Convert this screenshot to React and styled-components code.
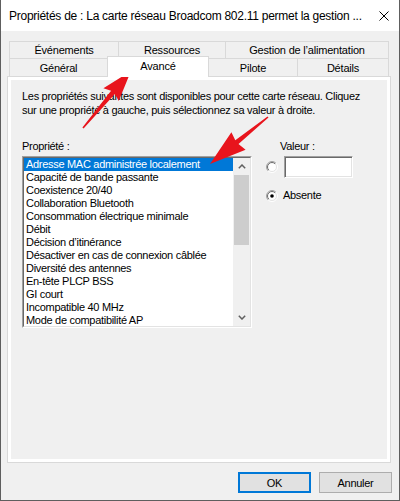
import React, { useId } from 'react';
import styled, { createGlobalStyle } from 'styled-components';

const GlobalStyle = createGlobalStyle`
  html, body { margin: 0; padding: 0; background: #ffffff; }
  body { width: 400px; height: 501px; overflow: hidden; }
  *, *::before, *::after { box-sizing: border-box; }
`;

const Window = styled.div`
  position: relative;
  width: 400px;
  height: 501px;
  display: flex;
  flex-direction: column;
  border: 1px solid #5e5e5e;
  border-top: none;
  background: #f0f0f0;
  font-family: "Liberation Sans", Arial, sans-serif;
  color: #000;
`;

const TitleBar = styled.div`
  flex: none;
  height: 31px;
  background: #ffffff;
  display: flex;
  align-items: center;
  justify-content: space-between;
  padding: 0 10px 0 8px;
`;

const Title = styled.div`
  font-size: 12px;
  letter-spacing: -0.26px;
  white-space: nowrap;
`;

const Body = styled.div`
  flex: 1;
  display: flex;
  flex-direction: column;
  padding: 10px 8px 0 6px;
`;

const TabRows = styled.div`
  display: flex;
  flex-direction: column;
  margin-left: 2px;
`;

const TabRow = styled.div`
  display: flex;
  align-items: flex-end;
  margin-top: ${(p) => (p.$front ? '-3px' : '0')};
`;

const Tab = styled.div`
  position: relative;
  width: ${(p) => p.$w}px;
  height: ${(p) => (p.$active ? 21 : 18)}px;
  margin-left: ${(p) => (p.$first ? 0 : -1)}px;
  margin-bottom: ${(p) => (p.$active ? -1 : 0)}px;
  padding-bottom: ${(p) => (p.$active ? 3 : 0)}px;
  z-index: ${(p) => (p.$active ? 3 : 1)};
  border: 1px solid #d9d9d9;
  border-bottom: ${(p) => (p.$back ? '1px solid #d9d9d9' : 'none')};
  background: ${(p) => (p.$active ? '#ffffff' : '#f0f0f0')};
  display: flex;
  align-items: center;
  justify-content: center;
  font-size: 11px;
  letter-spacing: -0.2px;
  white-space: nowrap;
`;

const Panel = styled.div`
  width: 384px;
  height: 387px;
  border: 1px solid #d9d9d9;
  background: #ffffff;
  padding: 3px;
  display: flex;
`;

const Page = styled.div`
  flex: 1;
  background: #f0f0f0;
  padding: 9px 0 0 11px;
  display: flex;
  flex-direction: column;
  font-size: 11px;
  letter-spacing: -0.3px;
`;

const Description = styled.p`
  margin: 0;
  line-height: 14px;
  white-space: nowrap;
`;

const Main = styled.div`
  display: flex;
  align-items: flex-start;
  margin-top: 22px;
`;

const LeftColumn = styled.div`
  width: 230px;
  display: flex;
  flex-direction: column;
`;

const RightColumn = styled.div`
  margin-left: 14px;
  display: flex;
  flex-direction: column;
`;

const FieldLabel = styled.div`
  line-height: 14px;
  margin-bottom: 3px;
  padding-left: ${(p) => p.$indent || 0}px;
  white-space: nowrap;
`;

const ListOuter = styled.div`
  width: 230px;
  height: 172px;
  border: 1px solid;
  border-color: #a0a0a0 #ffffff #ffffff #a0a0a0;
  display: flex;
`;

const ListInner = styled.div`
  flex: 1;
  border: 1px solid;
  border-color: #696969 #e3e3e3 #e3e3e3 #696969;
  background: #ffffff;
  display: flex;
  overflow: hidden;
`;

const Items = styled.div`
  flex: 1;
  display: flex;
  flex-direction: column;
  overflow: hidden;
`;

const Item = styled.div`
  flex: none;
  height: 13px;
  line-height: 13px;
  padding-left: 2px;
  white-space: nowrap;
  background: ${(p) => (p.$selected ? '#0078d7' : 'transparent')};
  color: ${(p) => (p.$selected ? '#ffffff' : '#000000')};
`;

const ScrollBar = styled.div`
  width: 17px;
  flex: none;
  background: #f0f0f0;
  display: flex;
  flex-direction: column;
`;

const ScrollButton = styled.div`
  height: 17px;
  flex: none;
  display: flex;
  align-items: center;
  justify-content: center;
`;

const Track = styled.div`
  flex: 1;
  display: flex;
  flex-direction: column;
`;

const Thumb = styled.div`
  height: 70px;
  margin: 0 1px;
  background: #cdcdcd;
`;

const ValueRow = styled.div`
  display: flex;
  align-items: center;
  gap: ${(p) => p.$gap}px;
  margin-top: ${(p) => p.$top || 0}px;
`;

const TextBox = styled.div`
  width: 69px;
  height: 22px;
  background: #ffffff;
  border: 1px solid;
  border-color: #a0a0a0 #ffffff #ffffff #a0a0a0;
  box-shadow: inset 1px 1px 0 #696969, inset -1px -1px 0 #e3e3e3;
`;

const RadioLabel = styled.span`
  line-height: 13px;
`;

const Footer = styled.div`
  display: flex;
  justify-content: flex-end;
  gap: 8px;
  margin-top: 9px;
  margin-right: -1px;
`;

const Button = styled.div`
  width: 73px;
  height: 21px;
  background: #e1e1e1;
  border: ${(p) => (p.$default ? '2px solid #0078d7' : '1px solid #adadad')};
  display: flex;
  align-items: center;
  justify-content: center;
  font-size: 11px;
  letter-spacing: -0.3px;
`;

const Overlay = styled.svg`
  position: absolute;
  top: 0;
  left: -1px;
  width: 400px;
  height: 501px;
  pointer-events: none;
`;

const CloseIcon = () => (
  <svg width="10" height="10" viewBox="0 0 10 10">
    <path d="M0.5 0.5 L9.5 9.5 M9.5 0.5 L0.5 9.5" stroke="#000" strokeWidth="1" fill="none" />
  </svg>
);

const Chevron = ({ down }) => (
  <svg width="8" height="5" viewBox="0 0 8 5">
    <path
      d={down ? 'M0.8 0.8 L4 4 L7.2 0.8' : 'M0.8 4.2 L4 1 L7.2 4.2'}
      stroke="#606060"
      strokeWidth="1.5"
      fill="none"
    />
  </svg>
);

const Radio = ({ checked }) => {
  const id = useId().replace(/:/g, '');
  return (
    <svg width="12" height="12" viewBox="0 0 12 12">
      <defs>
        <linearGradient id={`o${id}`} x1="0" y1="0" x2="1" y2="1">
          <stop offset="0.48" stopColor="#a0a0a0" />
          <stop offset="0.52" stopColor="#ffffff" />
        </linearGradient>
        <linearGradient id={`i${id}`} x1="0" y1="0" x2="1" y2="1">
          <stop offset="0.48" stopColor="#696969" />
          <stop offset="0.52" stopColor="#e3e3e3" />
        </linearGradient>
      </defs>
      <circle cx="6" cy="6" r="5.5" fill="none" stroke={`url(#o${id})`} strokeWidth="1" />
      <circle cx="6" cy="6" r="4.5" fill="#ffffff" stroke={`url(#i${id})`} strokeWidth="1" />
      {checked && <circle cx="6" cy="6" r="1.8" fill="#000" />}
    </svg>
  );
};

const properties = [
  'Adresse MAC administrée localement',
  'Capacité de bande passante',
  'Coexistence 20/40',
  'Collaboration Bluetooth',
  'Consommation électrique minimale',
  'Débit',
  'Décision d’itinérance',
  'Désactiver en cas de connexion câblée',
  'Diversité des antennes',
  'En-tête PLCP BSS',
  'GI court',
  'Incompatible 40 MHz',
  'Mode de compatibilité AP',
];

const backTabs = [
  { label: 'Événements', w: 110 },
  { label: 'Ressources', w: 108 },
  { label: 'Gestion de l’alimentation', w: 164 },
];

const frontTabs = [
  { label: 'Général', w: 99 },
  { label: 'Avancé', w: 102, active: true },
  { label: 'Pilote', w: 90 },
  { label: 'Détails', w: 92 },
];

export default function App() {
  return (
    <>
      <GlobalStyle />
      <Window>
        <TitleBar>
          <Title>Propriétés de : La carte réseau Broadcom 802.11 permet la gestion ...</Title>
          <CloseIcon />
        </TitleBar>
        <Body>
          <TabRows>
            <TabRow>
              {backTabs.map((t, i) => (
                <Tab key={t.label} $w={t.w} $first={i === 0} $back>
                  {t.label}
                </Tab>
              ))}
            </TabRow>
            <TabRow $front>
              {frontTabs.map((t, i) => (
                <Tab key={t.label} $w={t.w} $first={i === 0} $active={t.active}>
                  {t.label}
                </Tab>
              ))}
            </TabRow>
          </TabRows>
          <Panel>
            <Page>
              <Description>
                Les propriétés suivantes sont disponibles pour cette carte réseau. Cliquez
                <br />
                sur une propriété à gauche, puis sélectionnez sa valeur à droite.
              </Description>
              <Main>
                <LeftColumn>
                  <FieldLabel>Propriété :</FieldLabel>
                  <ListOuter>
                    <ListInner>
                      <Items>
                        {properties.map((p, i) => (
                          <Item key={p} $selected={i === 0}>
                            {p}
                          </Item>
                        ))}
                      </Items>
                      <ScrollBar>
                        <ScrollButton>
                          <Chevron />
                        </ScrollButton>
                        <Track>
                          <Thumb />
                        </Track>
                        <ScrollButton>
                          <Chevron down />
                        </ScrollButton>
                      </ScrollBar>
                    </ListInner>
                  </ListOuter>
                </LeftColumn>
                <RightColumn>
                  <FieldLabel $indent={14}>Valeur :</FieldLabel>
                  <ValueRow $gap={6}>
                    <Radio />
                    <TextBox />
                  </ValueRow>
                  <ValueRow $gap={5} $top={11}>
                    <Radio checked />
                    <RadioLabel>Absente</RadioLabel>
                  </ValueRow>
                </RightColumn>
              </Main>
            </Page>
          </Panel>
          <Footer>
            <Button $default>OK</Button>
            <Button>Annuler</Button>
          </Footer>
        </Body>
        <Overlay viewBox="0 0 400 501">
          <polygon
            fill="#e8141c"
            points="82.4,127.5 111.1,90.8 103.4,88.3 131,71 118.7,101.1 114.9,94 83.6,128.5"
          />
          <polygon
            fill="#e8141c"
            points="267.5,116.4 235.3,140.3 231.4,132.2 210,164 245.6,149.8 238.5,144.1 268.5,117.6"
          />
        </Overlay>
      </Window>
    </>
  );
}
